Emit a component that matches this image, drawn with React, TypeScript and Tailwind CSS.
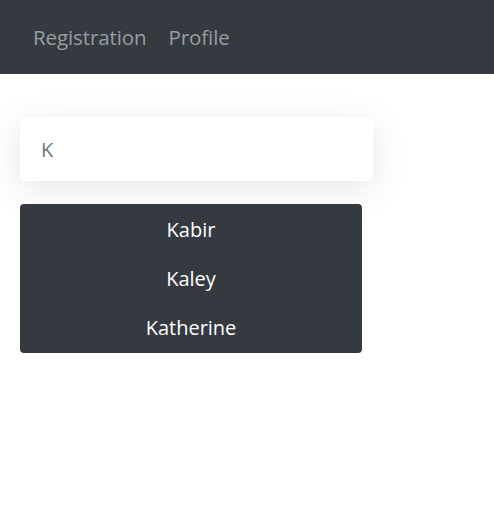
import { useState } from 'react';

const names = ['Kabir', 'Kaley', 'Katherine'];

export default function App() {
  const [query, setQuery] = useState('K');

  return (
    <div className="min-h-screen bg-white" style={{ fontFamily: '"Open Sans", "Noto Sans", sans-serif' }}>
      <nav className="h-[74px] bg-[#343a40] flex items-center pl-[33px] gap-[22px] text-[20.5px] text-[#9a9da0]">
        <a className="tracking-[-0.1px]">Registration</a>
        <a className="tracking-[-0.1px]">Profile</a>
      </nav>

      <div className="pl-5 pt-[43px]">
        <input
          value={query}
          onChange={(e) => setQuery(e.target.value)}
          className="block w-[353px] h-[64px] rounded-[6px] bg-white pl-[21px] text-[20px] text-[#6c757d] outline-none shadow-[0_8px_36px_rgba(0,0,0,0.1)]"
        />

        <ul className="mt-[23px] w-[342px] rounded-[4px] bg-[#343a40] pt-[1.5px]">
          {names.map((n) => (
            <li key={n} className="h-[49px] flex items-center justify-center text-[20px] text-white">
              {n}
            </li>
          ))}
        </ul>
      </div>
    </div>
  );
}
